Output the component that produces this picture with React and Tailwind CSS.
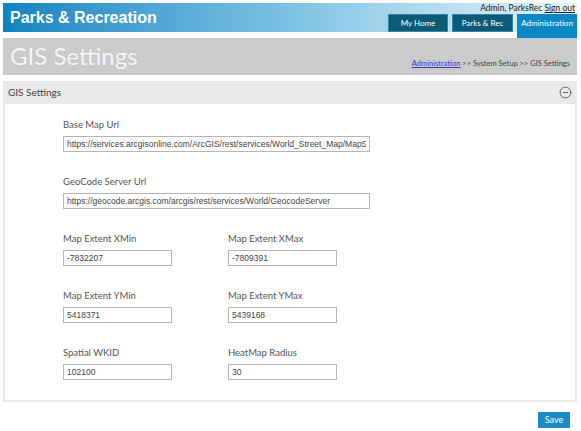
import { CircleMinus } from 'lucide-react'

const segoe = { fontFamily: 'Lato, "Open Sans", sans-serif' }

function Field({ label, value, wide }) {
  return (
    <div className="flex flex-col">
      <label className="h-[14px] leading-[14px] text-[9.5px] text-[#555] mb-[4px]">{label}</label>
      <input
        type="text"
        defaultValue={value}
        className={`${wide ? 'w-[307px]' : 'w-[109px]'} h-[16px] border border-[#b5b5b5] px-[3px] text-[8.5px] text-[#444] font-['Liberation_Sans',Arial,sans-serif] outline-none`}
      />
    </div>
  )
}

function App() {
  return (
    <div className="w-[581px] h-[431px] bg-white px-[3px] pt-[3px] overflow-hidden" style={segoe}>
      <div className="flex justify-between h-[29px] bg-gradient-to-r from-[#0a84c1] via-[#7cc3e3] to-[#e8f5fb]">
        <div className="pl-[7px] pt-[5px] text-white text-[16px] font-black leading-[20px] font-['Liberation_Sans',Arial,sans-serif]">
          Parks &amp; Recreation
        </div>
        <div className="flex flex-col items-end">
          <div className="h-[11px] pr-[3px] text-[8.5px] leading-[11px] text-[#222]">
            Admin, ParksRec <span className="underline">Sign out</span>
          </div>
          <div className="flex items-start gap-[4px] pr-[1px]">
            <div className="w-[60px] h-[18px] bg-[#0b5b78] border border-[#3b86a3] text-white text-[8px] flex items-center justify-center">My Home</div>
            <div className="w-[61px] h-[18px] bg-[#0b5b78] border border-[#3b86a3] text-white text-[8px] flex items-center justify-center">Parks &amp; Rec</div>
            <div className="w-[60px] h-[24px] bg-[#0a87c7] text-white text-[8px] flex items-center justify-center pb-[6px]">Administration</div>
          </div>
        </div>
      </div>

      <div className="mt-[6px] h-[37px] bg-[#cbcbcb] flex items-end justify-between px-[7px] pb-[4px] mr-[1px]">
        <h1 className="text-[24px] leading-[30px] text-[#f6f6f6] font-normal" style={{ textShadow: '0 0 1px #bbb' }}>GIS Settings</h1>
        <div className="text-[7.5px] text-[#444] pb-[2px]">
          <a href="#" className="text-[#3535d0] underline">Administration</a> &gt;&gt; System Setup &gt;&gt; GIS Settings
        </div>
      </div>

      <div className="mt-[6px] mr-[1px]">
        <div className="h-[23px] bg-[#e9e9e9] flex items-center justify-between pl-[5px] pr-[5px]">
          <span className="text-[10px] text-[#444]">GIS Settings</span>
          <CircleMinus size={13} strokeWidth={1.5} className="text-[#444]" />
        </div>
        <div className="h-[298px] border-2 border-t-0 border-[#e9e9e9] pl-[58px] pt-[14px] flex flex-col gap-[23px]">
          <Field label="Base Map Url" value="https://services.arcgisonline.com/ArcGIS/rest/services/World_Street_Map/MapServer" wide />
          <Field label="GeoCode Server Url" value="https://geocode.arcgis.com/arcgis/rest/services/World/GeocodeServer" wide />
          <div className="flex gap-[56px]">
            <Field label="Map Extent XMin" value="-7832207" />
            <Field label="Map Extent XMax" value="-7809391" />
          </div>
          <div className="flex gap-[56px]">
            <Field label="Map Extent YMin" value="5418371" />
            <Field label="Map Extent YMax" value="5439168" />
          </div>
          <div className="flex gap-[56px]">
            <Field label="Spatial WKID" value="102100" />
            <Field label="HeatMap Radius" value="30" />
          </div>
        </div>
      </div>

      <div className="flex justify-end mt-[10px] pr-[8px]">
        <button className="w-[32px] h-[16px] bg-[#1a8bc6] text-white text-[9px]">Save</button>
      </div>
    </div>
  )
}

export default App
